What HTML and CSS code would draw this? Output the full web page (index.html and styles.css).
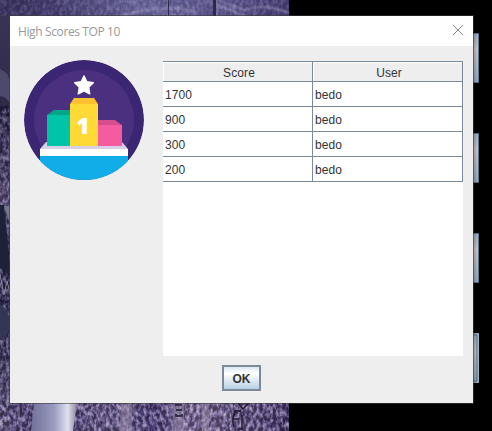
FILE: index.html
```html
<!DOCTYPE html>
<html lang="en">
<head>
<meta charset="utf-8">
<title>High Scores TOP 10</title>
<link rel="stylesheet" href="styles.css">
</head>
<body>
<svg class="backdrop" viewBox="0 0 492 431" aria-hidden="true">
  <defs>
    <filter id="grain" x="0" y="0" width="100%" height="100%" color-interpolation-filters="sRGB">
      <feTurbulence type="fractalNoise" baseFrequency="0.3 0.18" numOctaves="3" seed="8"/>
      <feColorMatrix values="2.2 0 0 0 -.75  2.2 0 0 0 -.8  2.2 0 0 0 -.6  0 0 0 0 1"/>
    </filter>
    <filter id="soft"><feGaussianBlur stdDeviation="1.2"/></filter>
    <linearGradient id="sky">
      <stop offset="0" stop-color="#37325a"/><stop offset=".2" stop-color="#484272"/>
      <stop offset=".5" stop-color="#6c699c"/><stop offset=".8" stop-color="#5c568c"/>
      <stop offset="1" stop-color="#433a6c"/>
    </linearGradient>
    <linearGradient id="ground">
      <stop offset="0" stop-color="#5c5278"/><stop offset=".3" stop-color="#655a80"/>
      <stop offset=".42" stop-color="#7b7092"/><stop offset=".53" stop-color="#4d4275"/>
      <stop offset=".64" stop-color="#91809f"/><stop offset=".8" stop-color="#7c6c90"/>
      <stop offset="1" stop-color="#4f406a"/>
    </linearGradient>
    <linearGradient id="pillar">
      <stop offset="0" stop-color="#70709a"/><stop offset=".5" stop-color="#9a9bbd"/>
      <stop offset=".8" stop-color="#dfe0ef"/><stop offset="1" stop-color="#8c859f"/>
    </linearGradient>
    <linearGradient id="edge" x1="0" y1="0" x2="0" y2="1">
      <stop offset="0" stop-color="#393456"/><stop offset=".25" stop-color="#2d2944"/>
      <stop offset=".45" stop-color="#59506f"/><stop offset=".6" stop-color="#262640"/>
      <stop offset=".78" stop-color="#373451"/><stop offset="1" stop-color="#6c6481"/>
    </linearGradient>
    <linearGradient id="steel" x1="0" y1="0" x2="0" y2="1">
      <stop offset="0" stop-color="#a5bacd"/><stop offset=".33" stop-color="#d4d4d4"/>
      <stop offset="1" stop-color="#9cb5cc"/>
    </linearGradient>
    <linearGradient id="cast" gradientUnits="userSpaceOnUse" x1="473" y1="0" x2="479" y2="0">
      <stop offset="0" stop-color="#000" stop-opacity=".3"/><stop offset="1" stop-color="#000" stop-opacity="0"/>
    </linearGradient>
  </defs>
  <rect width="492" height="431" fill="#000"/>
  <rect width="289" height="30" fill="url(#sky)"/>
  <rect y="390" width="289" height="41" fill="url(#ground)"/>
  <rect y="14" width="12" height="417" fill="url(#edge)"/>
  <path d="M0 69Q9 72 11 84V105Q6 96 0 96Z" fill="#4d496d"/>
  <path d="M120 16Q170 3 195 12M211 3L245 16M218 0L244 10Q265 3 289 13" fill="none" stroke="#a09cc2" stroke-width="1.500" filter="url(#soft)"/>
  <path class="grain-sky" d="M0 0H289V16H0Z" filter="url(#grain)"/>
  <path class="grain-ground" d="M75 403H289V431H75ZM0 403H34V431H0Z" filter="url(#grain)"/>
  <path class="grain-edge" d="M0 105H10V205H0ZM0 342H10V403H0Z" filter="url(#grain)"/>
  <path d="M0 205H4L11 276L0 268Z" fill="#202139"/>
  <path d="M4 206H11V227Z" fill="#77778e"/>
  <path d="M0 274L4 295 7 281 11 298" fill="none" stroke="#8d899f"/>
  <path d="M0 304Q12 312 9 330Q4 342 0 340Z" fill="#353653"/>
  <path d="M0 16V69M0 105H10V205H0Z" fill="none"/>
  <path d="M168.500 0V16" stroke="#302b50"/>
  <path d="M214.500 0V16" stroke="#302746" stroke-width="3"/>
  <path d="M217 0V16" stroke="#8580a8"/>
  <path d="M34 403H77L73 431H31Z" fill="url(#pillar)"/>
  <path d="M122 403H132V431H119ZM174 403H184V431H172ZM202 403H209V431H202Z" fill="#9b8daa" opacity=".5"/>
  <path d="M175 405H182M176 410H182M176 414V416H182V414M238 403L243 409 249 403M236 410Q231 418 234 427M234 411H241M234 419H239M242 415V429H238" fill="none" stroke="#1b182e" stroke-width="1.500"/>
  <g class="side-buttons">
    <path d="M470 33.500H478.500V82.500H470Z"/>
    <path d="M470 133.500H478.500V182.500H470Z"/>
    <path d="M470 233.500H478.500V282.500H470Z"/>
    <path class="focused" d="M470 333.500H478.500V382.500H470Z"/>
    <path d="M470 335H477V381H470"/>
  </g>
  <path d="M473 33H479V83H473ZM473 133H479V183H473ZM473 233H479V283H473ZM473 333H479V383H473Z" fill="url(#cast)"/>
</svg>
<main class="dialog">
  <header class="titlebar">
    <span class="title">High Scores TOP 10</span>
    <svg class="close" viewBox="0 0 10 10" aria-label="Close"><path d="M0 0L10 10M10 0L0 10"/></svg>
  </header>
  <div class="content">
    <svg class="podium" viewBox="0 0 120 120" aria-hidden="true">
      <defs><clipPath id="disc"><circle cx="60" cy="60" r="60"/></clipPath></defs>
      <g clip-path="url(#disc)">
        <circle cx="60" cy="60" r="60" fill="#3a2672"/>
        <circle cx="60" cy="60" r="50" fill="#4a307f"/>
        <path fill="#fff" stroke="#fff" stroke-width="1.500" stroke-linejoin="round" d="M60 16L62.800 21.800 69.300 22.700 64.600 27.200 65.700 33.800 60 30.800 54.300 33.800 55.400 27.200 50.700 22.700 57.200 21.800Z"/>
        <path fill="#00a58b" d="M23 55L30 50H46V55Z"/><path fill="#00c4a7" d="M23 55H46V86H23Z"/>
        <path fill="#d64d8d" d="M74 60H91L98 65H74Z"/><path fill="#f55c9f" d="M74 65H98V86H74Z"/>
        <path fill="#d8d0e7" d="M22 82H98L104 89H16Z"/>
        <path fill="#00c4a7" d="M23 80H46V86H23Z"/><path fill="#f55c9f" d="M74 80H98V86H74Z"/>
        <path fill="#fdc02f" d="M46 44L50 38H70L74 44Z"/><path fill="#ffda36" d="M46 44H74V86H46Z"/>
        <path fill="#fff" d="M16 89H104V96H16Z"/><path fill="#10ade9" d="M16 96H104V120H16Z"/>
        <text class="rank" x="59" y="73.500">1</text>
      </g>
    </svg>
    <div class="viewport">
      <table class="scores">
        <thead><tr><th>Score</th><th>User</th></tr></thead>
        <tbody>
          <tr><td>1700</td><td>bedo</td></tr>
          <tr><td>900</td><td>bedo</td></tr>
          <tr><td>300</td><td>bedo</td></tr>
          <tr><td>200</td><td>bedo</td></tr>
        </tbody>
      </table>
    </div>
  </div>
  <footer class="actions"><button class="ok">OK</button></footer>
</main>
</body>
</html>
```
FILE: styles.css
```css
* { box-sizing: border-box; }
body {
  margin: 0;
  width: 492px;
  height: 431px;
  padding: 16px 0 0 10px;
  overflow: hidden;
  background: #000;
  font: 12px "Liberation Sans", Arial, sans-serif;
  color: #333;
}
.backdrop { position: absolute; inset: 0; width: 492px; height: 431px; }
.grain-sky { opacity: .14; }
.grain-ground { opacity: .45; }
.grain-edge { opacity: .35; }
.side-buttons path { fill: url(#steel); stroke: #5d7891; }
.side-buttons .focused { stroke: #a3b8cc; }
.dialog {
  position: relative;
  width: 463px;
  height: 387px;
  background: #eee;
  box-shadow: 0 0 0 1px rgba(60, 60, 60, .6);
}
.titlebar {
  display: flex;
  justify-content: space-between;
  align-items: center;
  height: 30px;
  padding: 0 10px 0 8px;
  background: #fff;
  color: #999;
  font: 12px "Open Sans", "Noto Sans", sans-serif;
}
.title { letter-spacing: -.38px; }
.close { width: 10px; height: 10px; margin-top: -2px; overflow: visible; }
.close path { stroke: #888; stroke-width: 1; }
.content {
  display: flex;
  justify-content: space-between;
  padding: 14px 10px 0 14px;
}
.podium { width: 120px; height: 120px; }
.rank { fill: #fff; font: 800 23px "Open Sans", sans-serif; text-anchor: middle; }
.viewport { width: 300px; height: 295px; margin-top: 1px; background: #fff; }
.scores {
  width: 300px;
  table-layout: fixed;
  border-collapse: separate;
  border-spacing: 0;
}
.scores th, .scores td {
  padding: 0;
  border-right: 1px solid #7a8a99;
  border-bottom: 1px solid #7a8a99;
}
.scores th {
  height: 21px;
  padding: 3px 0 0 3px;
  border-top: 1px solid #7a8a99;
  background: #eee;
  box-shadow: inset 1px 1px #fff;
  font-weight: normal;
  line-height: 14px;
  letter-spacing: .1px;
}
.scores td { height: 25px; padding: 1px 0 0 2px; letter-spacing: .1px; }
.actions { display: flex; justify-content: center; padding-top: 9px; }
.ok {
  width: 39px;
  height: 26px;
  padding: 1px 0 0;
  border: 2px solid #7a8a99;
  border-radius: 0;
  background: linear-gradient(#dde8f3, #fff 30%, #b8cfe5);
  color: #333;
  font: bold 12px "Liberation Sans", Arial, sans-serif;
}
```
